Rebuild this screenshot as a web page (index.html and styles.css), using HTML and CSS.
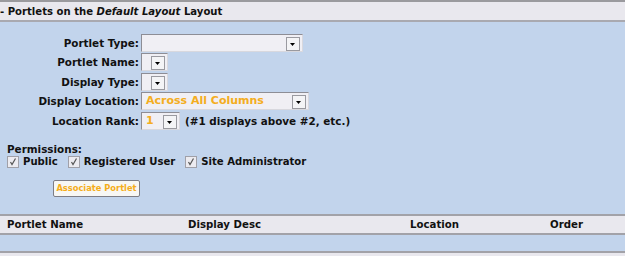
FILE: index.html
```html
<!DOCTYPE html>
<html lang="en">
<head>
    <meta charset="UTF-8">
    <title>Portlets</title>
    <link rel="stylesheet" href="styles.css">
</head>
<body>
    <div class="section-head">- Portlets on the <em>Default Layout</em> Layout</div>

    <div class="panel">
        <div class="form-grid">
            <label>Portlet Type:</label>
            <div><span class="select w-type"><span class="val"></span><span class="arrow"></span></span></div>

            <label>Portlet Name:</label>
            <div><span class="select w-tiny"><span class="val"></span><span class="arrow"></span></span></div>

            <label>Display Type:</label>
            <div><span class="select w-tiny"><span class="val"></span><span class="arrow"></span></span></div>

            <label>Display Location:</label>
            <div><span class="select w-loc"><span class="val">Across All Columns</span><span class="arrow"></span></span></div>

            <label>Location Rank:</label>
            <div class="rank">
                <span class="select w-rank"><span class="val">1</span><span class="arrow"></span></span>
                <span class="hint">(#1 displays above #2, etc.)</span>
            </div>
        </div>

        <div class="perms">
            <div class="perms-title">Permissions:</div>
            <div class="perms-list">
                <span class="check"><span class="box"></span>Public</span>
                <span class="check"><span class="box"></span>Registered User</span>
                <span class="check"><span class="box"></span>Site Administrator</span>
            </div>
        </div>

        <button class="btn">Associate Portlet</button>
    </div>

    <div class="list-head">
        <span class="col-name">Portlet Name</span>
        <span class="col-desc">Display Desc</span>
        <span class="col-loc">Location</span>
        <span class="col-order">Order</span>
    </div>
    <div class="list-empty"></div>
    <div class="list-foot"></div>
</body>
</html>
```

FILE: styles.css
```css
body {
    margin: 0;
    font-family: "DejaVu Sans", Verdana, sans-serif;
    font-size: 10.4px;
    font-weight: bold;
    color: #111;
    background: #e9e8ee;
}
.section-head {
    border-top: 2px solid #9a9a9e;
    border-bottom: 2px solid #a9a9b0;
    background: #e9e8ee;
    height: 18px;
    line-height: 19px;
    font-size: 10.1px;
}
.section-head em {
    font-style: italic;
}
.panel {
    background: #c2d4ec;
    padding: 11px 0 17px 0;
    height: 164px;
    box-sizing: content-box;
}
.form-grid {
    display: grid;
    grid-template-columns: 139px auto;
    grid-auto-rows: 19.5px;
    column-gap: 2px;
    align-items: center;
}
.form-grid label {
    text-align: right;
}
.select {
    display: flex;
    height: 18px;
    box-sizing: border-box;
    border: 1px solid #8d8d95;
    border-right-color: #d8d8de;
    border-bottom-color: #d8d8de;
    background: #f0eff4;
}
.select .val {
    flex: 1;
    color: #f4ad20;
    font-size: 11px;
    line-height: 16px;
    padding-left: 4px;
}
.select .arrow {
    width: 12px;
    height: 12px;
    margin: 2px 2px 0 0;
    border: 1px solid #9a9aa0;
    background: #f4f4f6 url("data:image/svg+xml,%3Csvg xmlns='http://www.w3.org/2000/svg' width='12' height='12'%3E%3Cpath d='M3 5h5l-2.5 3z' fill='%23000'/%3E%3C/svg%3E") no-repeat center;
}
.w-type { width: 162px; }
.w-tiny { width: 27px; }
.w-loc { width: 168px; }
.w-rank { width: 39px; }
.rank {
    display: flex;
    align-items: center;
    gap: 5px;
}
.perms {
    margin: 12px 0 0 7px;
}
.perms-title {
    line-height: 12px;
}
.perms-list {
    display: flex;
    gap: 10px;
    margin-top: 1px;
    font-size: 10.1px;
}
.check {
    display: flex;
    align-items: center;
    gap: 4px;
}
.check .box {
    width: 10px;
    height: 10px;
    border: 1px solid #a0a0a8;
    background: #ecebf0 url("data:image/svg+xml,%3Csvg xmlns='http://www.w3.org/2000/svg' width='10' height='10'%3E%3Cpath d='M2.5 5l1.5 2.5 3.5-6' stroke='%23555' stroke-width='1.2' fill='none'/%3E%3C/svg%3E") no-repeat center;
}
.btn {
    display: block;
    margin: 12px 0 0 53px;
    width: 87px;
    height: 17px;
    padding: 0;
    font-family: "DejaVu Sans", Verdana, sans-serif;
    font-size: 8.3px;
    font-weight: bold;
    color: #f5ad1a;
    background: #f7f7f4;
    border: 1px solid #7d7d85;
    border-radius: 2px;
}
.list-head {
    display: flex;
    border-top: 2px solid #a2a2a8;
    border-bottom: 2px solid #a2a2a8;
    background: #e9e8ee;
    height: 17px;
    line-height: 18px;
    padding-left: 7px;
    font-size: 10.2px;
}
.col-name { width: 181px; }
.col-desc { width: 222px; }
.col-loc { width: 140px; }
.list-empty {
    background: #c2d4ec;
    height: 16px;
}
.list-foot {
    border-top: 2px solid #a2a2a8;
    background: #e9e8ee;
    height: 10px;
}
```
